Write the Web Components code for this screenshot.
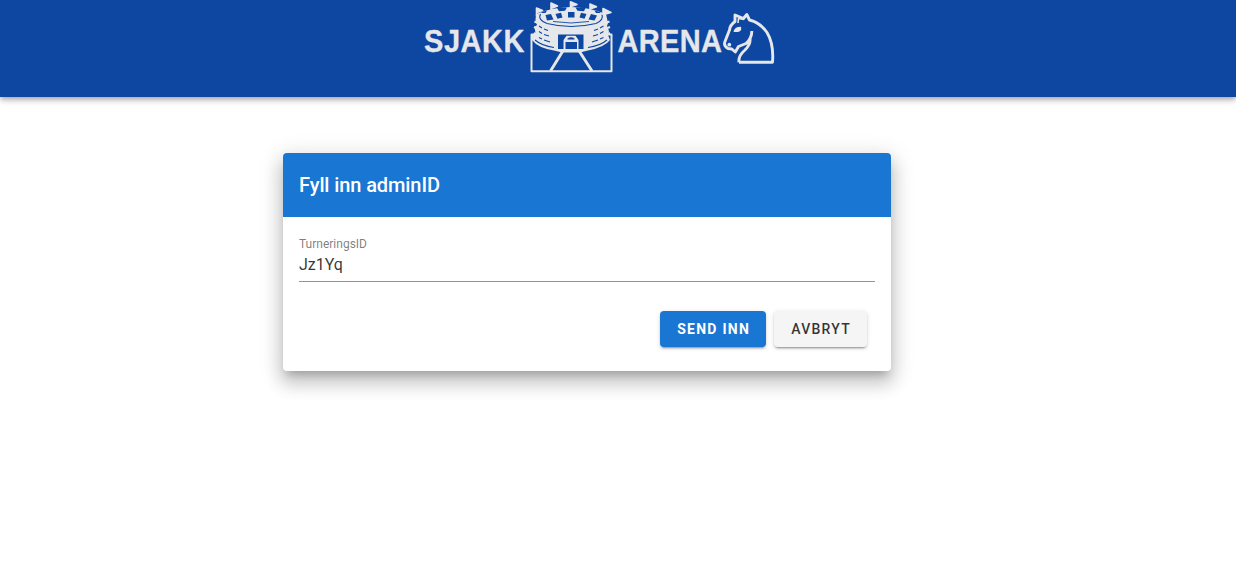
<!DOCTYPE html>
<html lang="no">
<head>
<meta charset="utf-8">
<title>Sjakkarena</title>
<style>
html,body{margin:0;background:#fff;font-family:Roboto,"Liberation Sans",sans-serif;height:100%;overflow:hidden}
</style>
</head>
<body>
<sjakk-app></sjakk-app>
<script>
const define = (name, html) => customElements.define(name, class extends HTMLElement {
  constructor() {
    super();
    this.attachShadow({ mode: 'open' }).innerHTML = html;
  }
});

define('arena-logo', `
<style>:host{display:block;width:360px;height:80px}svg{display:block}</style>
<svg width="360" height="80" viewBox="420 0 360 80" fill="none" stroke="#e6e7ea" stroke-linejoin="round">
  <g fill="#e6e7ea" stroke-width=".3" font-family="Liberation Sans, Arial, sans-serif" font-weight="bold" font-size="29" style="font-kerning:none" transform="translate(0 51.900) scale(1 1.080)">
    <text x="424" y="0" textLength="100.500" lengthAdjust="spacing">SJAKK</text>
    <text x="617.500" y="0" textLength="104.500" lengthAdjust="spacing">ARENA</text>
  </g>
  <!-- walls and road -->
  <path d="M536 34.500H531.500V71.300H611.500V34.500H607" stroke-width="2"/>
  <path d="M563.500 50 550.500 71M578.500 50 592 71" stroke-width="2.900"/>
  <!-- arena body -->
  <path d="M536 14Q571 0 606 14L608 23 607 26 609 31 608 35 610 40Q605 47 588 50.500L580 52.500H562L554 50.500Q538 48 532 40V34.500L535.500 33 534.500 27 537 25 535.500 20Z" fill="#e6e7ea" stroke="none"/>
  <g stroke="#0d47a1" stroke-width="1.100">
    <path d="M540.500 14Q537.500 20 547 23.500Q571 29.500 596 23.500Q604 20 602 14.500"/>
    <path d="M553 21.500Q571 24.500 589 21.500" stroke-width=".9"/>
    <path d="M539 26 542 28M544 29 548 30.500M539 31.500 542 33.500M544 34.500 549 36M539 37.500 542 39M544 40 550 42M535 40Q542 46 554 47.500M603.500 26 600 28M598 29 594 30.500M603.500 31.500 600 33.500M598 34.500 593 36M603.500 37.500 600 39M598 40 592 42M607 40Q600 46 588 47.500"/>
  </g>
  <g fill="#0d47a1" stroke="none">
    <path d="M558 34.500H583.500V49H578.500V40L575.500 35.800H566.500L563.500 40V49H558Z"/>
    <path d="M565.500 42H577V49H565.500Z"/>
    <path d="M567.500 38.500Q571 36 574.500 38.500V39.500H567.500Z"/>
    <path d="M568 12H574.500V17.500H568ZM555.500 14 561 12.800 562.500 17.500 557.500 18.700ZM581 12.800 586.500 14 584.500 18.700 579.500 17.500ZM545.500 15 551 14 553.500 19.500 547 20.500ZM591 14 597 15.500 594.500 20.500 588.500 19.500Z"/>
    <path d="M541.500 12 547 10.500 545.500 13H541.500ZM556.500 7 567 7.500 565 10.800 559 11.300ZM575.500 7.500 586 7 584 11.300 577.500 10.800ZM594.500 10.500 600.500 12 600 13 596 13Z"/>
  </g>
  <!-- turrets and flags -->
  <g stroke-width="1.600">
    <path d="M536.500 16V8L542.500 10.500 537 12.500M551 11V3L557.500 6 551 8.500M570.500 9V1.800L577 4.500 571 6.500M590 11V4L596.500 6.700 590 9M603 15V8.500L611 12.500 604 14.500" fill="#e6e7ea"/>
    <path d="M534.500 21.500 538 23M534 27 538 29M534 33 538 35M605 23 609.500 21.500M605 29 610 27M605 35 610 33" stroke-width="2"/>
  </g>
  <!-- knight -->
  <path d="M739 62.200H772.500Q774 44 767 32.500Q760 22.500 749.500 20L746.800 14.500 743.500 18.500 735 15V21.500Q730 25 729.500 30L724.800 42Q723.500 46 728 48.500L731.800 49 735.300 52 738.500 46.500 746 43.500Q752 38 751.800 31M750 38Q751 44 745 50Q738 56 739 62.200" stroke-width="2.900"/>
  <path d="M744 19.500 738.500 18.500 738 23" stroke-width="1.600"/>
  <path d="M734.300 31.300Q735.500 27.500 740.500 27.500Q741.500 31.800 734.300 31.300Z" fill="#e6e7ea" stroke-width="1.400"/>
  <circle cx="729.300" cy="44.700" r="1.900" fill="#e6e7ea" stroke="none"/>
</svg>`);

define('app-bar', `
<style>
:host{display:flex;box-sizing:border-box;height:97px;padding-left:420px;align-items:flex-start;background:#0d47a1;
box-shadow:0 2px 4px -1px rgba(0,0,0,.2),0 4px 5px rgba(0,0,0,.14),0 1px 10px rgba(0,0,0,.12)}
</style><slot></slot>`);

define('form-card', `
<style>
:host{display:block;box-sizing:border-box;width:608px;height:218px;border-radius:4px;background:#fff;
box-shadow:0 7px 8px -4px rgba(0,0,0,.2),0 12px 17px 2px rgba(0,0,0,.14),0 5px 22px 4px rgba(0,0,0,.12)}
header{display:flex;align-items:center;height:64px;padding:0 16px;background:#1976d2;color:#fff;border-radius:4px 4px 0 0;font-size:20px;font-weight:500;letter-spacing:-.1px;box-sizing:border-box}
.body{padding:18px 16px 0}
footer{display:flex;justify-content:flex-end;gap:8px;padding:29px 24px 0}
</style>
<header><slot name="title"></slot></header>
<div class="body"><slot></slot></div>
<footer><slot name="actions"></slot></footer>`);

define('text-field', `
<style>
:host{display:block;box-sizing:border-box;height:47px;border-bottom:1px solid #949494}
.label{font-size:12px;line-height:18px;color:rgba(0,0,0,.52)}
.value{font-size:16px;line-height:24px;color:rgba(0,0,0,.8)}
</style>
<div class="label"><slot name="label"></slot></div>
<div class="value"><slot></slot></div>`);

define('action-button', `
<style>
:host{display:flex;align-items:center;justify-content:center;box-sizing:border-box;width:93px;height:36px;padding-left:1.250px;border-radius:4px;background:#f5f5f5;color:rgba(0,0,0,.8);
font-size:14px;font-weight:500;letter-spacing:1.250px;white-space:nowrap;
box-shadow:0 3px 1px -2px rgba(0,0,0,.2),0 2px 2px rgba(0,0,0,.14),0 1px 5px rgba(0,0,0,.12)}
:host([primary]){width:106px;background:#1976d2;color:#fff;font-weight:700}
</style><slot></slot>`);

define('sjakk-app', `
<style>
:host{display:block}
main{padding:56px 0 0 283px}
</style>
<app-bar><arena-logo></arena-logo></app-bar>
<main>
  <form-card>
    <span slot="title">Fyll inn adminID</span>
    <text-field><span slot="label">TurneringsID</span>Jz1Yq</text-field>
    <action-button slot="actions" primary>SEND INN</action-button>
    <action-button slot="actions">AVBRYT</action-button>
  </form-card>
</main>`);
</script>
</body>
</html>
